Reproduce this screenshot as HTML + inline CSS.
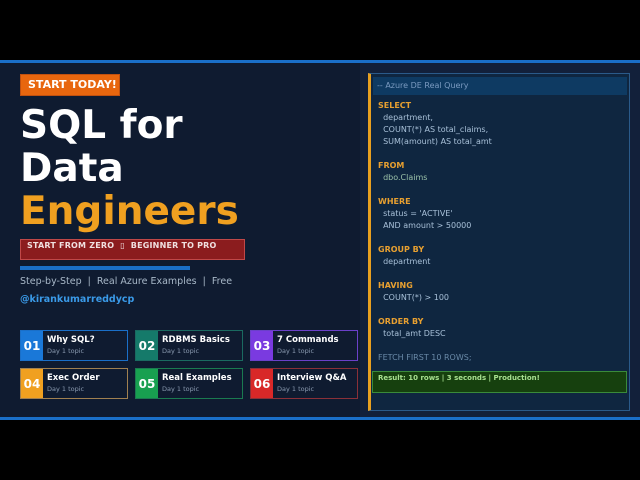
<!DOCTYPE html>
<html><head><meta charset="utf-8"><style>
*{margin:0;padding:0;box-sizing:border-box}
body{width:640px;height:480px;background:#000;position:relative;overflow:hidden;font-family:"DejaVu Sans","Liberation Sans",sans-serif}
.a{position:absolute}
.main{left:0;top:60px;width:640px;height:360px;background:#0f1b30;border-top:3px solid #1a6fc8;border-bottom:3px solid #1a6fc8}
.rp{left:360px;top:63px;width:280px;height:354px;background:#12203a}
.t{color:#fff;font-weight:bold;font-size:39px;left:20px;line-height:1}
.card{position:absolute;width:108px;height:31px;background:#0f1b30;border:1px solid}
.num{position:absolute;left:0;top:0;width:22px;height:100%;color:#fff;font-weight:bold;font-size:12px;display:flex;align-items:center;justify-content:center}
.ct{position:absolute;left:26px;top:4px;color:#fff;font-weight:bold;font-size:8.5px}
.cs{position:absolute;left:26px;top:16px;color:#8a9ab0;font-size:6.5px}
.box{left:368px;top:73px;width:262px;height:338px;background:#0f2640;border:1px solid #2a5a8a;border-left:3px solid #e8a020}
.code{position:absolute;left:7px;font-size:8px;color:#a8c0d8;line-height:12px}
.k{color:#e8a030;font-weight:bold}
</style></head><body>
<div class="a main"></div>
<div class="a rp"></div>
<div class="a" style="left:20px;top:74px;width:100px;height:22px;background:#e8660e;border:1px solid #c05010;color:#fff;font-weight:bold;font-size:11px;line-height:20px;padding-left:7px">START TODAY!</div>
<div class="a t" style="top:106px">SQL for</div>
<div class="a t" style="top:149px">Data</div>
<div class="a t" style="top:192px;color:#f0a020">Engineers</div>
<div class="a" style="left:20px;top:239px;width:225px;height:21px;background:#8b1c1e;border:1px solid #c04848;color:#f0e0e0;font-weight:bold;font-size:8px;line-height:12px;padding-left:6px;letter-spacing:0.2px">START FROM ZERO &nbsp;▯&nbsp; BEGINNER TO PRO</div>
<div class="a" style="left:20px;top:266px;width:170px;height:4px;background:#1a6fc8"></div>
<div class="a" style="left:20px;top:276px;color:#a8b8c8;font-size:9.5px">Step-by-Step &nbsp;| &nbsp;Real Azure Examples &nbsp;| &nbsp;Free</div>
<div class="a" style="left:20px;top:294px;color:#3a9ae8;font-size:9.5px;font-weight:bold">@kirankumarreddycp</div>

<div class="card" style="left:20px;top:330px;border-color:#1a6fc8"><div class="num" style="background:#1a78d8">01</div><div class="ct">Why SQL?</div><div class="cs">Day 1 topic</div></div>
<div class="card" style="left:135px;top:330px;border-color:#1a6a60"><div class="num" style="background:#157a6a">02</div><div class="ct">RDBMS Basics</div><div class="cs">Day 1 topic</div></div>
<div class="card" style="left:250px;top:330px;border-color:#6a40c8"><div class="num" style="background:#7a3ae0">03</div><div class="ct">7 Commands</div><div class="cs">Day 1 topic</div></div>
<div class="card" style="left:20px;top:368px;border-color:#a08050"><div class="num" style="background:#f0a020">04</div><div class="ct">Exec Order</div><div class="cs">Day 1 topic</div></div>
<div class="card" style="left:135px;top:368px;border-color:#1a7a50"><div class="num" style="background:#18a050">05</div><div class="ct">Real Examples</div><div class="cs">Day 1 topic</div></div>
<div class="card" style="left:250px;top:368px;border-color:#8a3038"><div class="num" style="background:#d82828">06</div><div class="ct">Interview Q&amp;A</div><div class="cs">Day 1 topic</div></div>

<div class="a box">
<div class="a" style="left:2px;top:3px;width:254px;height:18px;background:#0e3a62;color:#7a9ac0;font-size:8px;line-height:18px;padding-left:4px">-- Azure DE Real Query</div>
<div class="code" style="top:26px">
<div class="k">SELECT</div>
<div>&nbsp; department,</div>
<div>&nbsp; COUNT(*) AS total_claims,</div>
<div>&nbsp; SUM(amount) AS total_amt</div>
<div>&nbsp;</div>
<div class="k">FROM</div>
<div style="color:#9ac0a8">&nbsp; dbo.Claims</div>
<div>&nbsp;</div>
<div class="k">WHERE</div>
<div>&nbsp; status = 'ACTIVE'</div>
<div>&nbsp; AND amount &gt; 50000</div>
<div>&nbsp;</div>
<div class="k">GROUP BY</div>
<div>&nbsp; department</div>
<div>&nbsp;</div>
<div class="k">HAVING</div>
<div>&nbsp; COUNT(*) &gt; 100</div>
<div>&nbsp;</div>
<div class="k">ORDER BY</div>
<div>&nbsp; total_amt DESC</div>
<div>&nbsp;</div>
<div style="color:#6a8aa8">FETCH FIRST 10 ROWS;</div>
</div>
<div class="a" style="left:1px;top:297px;width:255px;height:22px;background:#16400e;border:1px solid #3a8a3a;color:#a8e090;font-weight:bold;font-size:7px;line-height:12px;padding-left:5px">Result: 10 rows | 3 seconds | Production!</div>
</div>
</body></html>
